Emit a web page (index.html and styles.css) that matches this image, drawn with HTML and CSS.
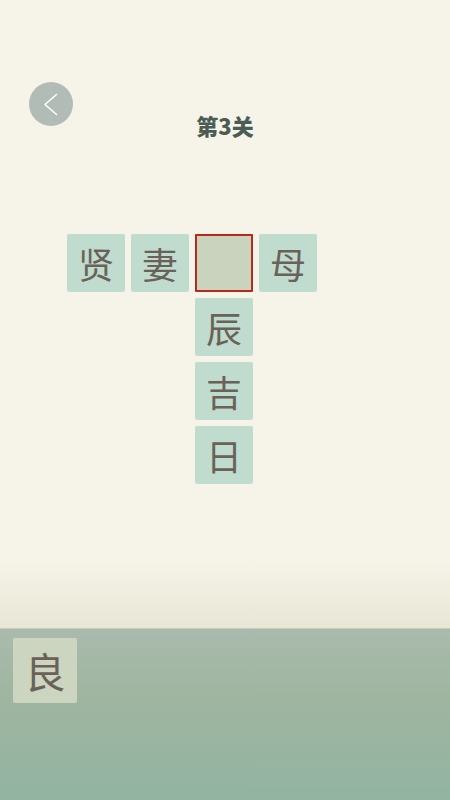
FILE: index.html
```html
<!DOCTYPE html>
<html lang="zh">
<head>
<meta charset="utf-8">
<link rel="stylesheet" href="styles.css">
</head>
<body>
<div class="screen">
  <header class="header">
    <div class="back">
      <svg width="44" height="44" viewBox="0 0 44 44"><path d="M27.5 12.5 L16 22.5 L27.5 32.5" fill="none" stroke="#ffffff" stroke-width="1.6" stroke-linecap="round" stroke-linejoin="round"/></svg>
    </div>
    <h1 class="title">第3关</h1>
    <div></div>
  </header>
  <main class="stage">
    <div class="board">
      <div class="tile c1 r1">贤</div>
      <div class="tile c2 r1">妻</div>
      <div class="tile c3 r1 empty"></div>
      <div class="tile c4 r1">母</div>
      <div class="tile c3 r2">辰</div>
      <div class="tile c3 r3">吉</div>
      <div class="tile c3 r4">日</div>
    </div>
  </main>
  <div class="fade"></div>
  <section class="tray">
    <div class="pick">良</div>
  </section>
</div>
</body>
</html>
```
FILE: styles.css
```css
html, body {
  margin: 0;
  padding: 0;
}
body {
  background: #f6f3e8;
  font-family: "Noto Sans CJK SC", "Noto Sans", sans-serif;
}
.screen {
  width: 450px;
  height: 800px;
  display: flex;
  flex-direction: column;
  overflow: hidden;
}
.header {
  display: grid;
  grid-template-columns: 1fr auto 1fr;
  align-items: start;
  padding: 82px 0 0 29px;
  height: 152px;
  box-sizing: border-box;
}
.back {
  width: 44px;
  height: 44px;
  border-radius: 50%;
  background: #b2bcb6;
}
.back svg { display: block; }
.title {
  margin: 28px 0 0 -29px;
  font-size: 22px;
  line-height: 30px;
  font-weight: 900;
  color: #4a5c53;
  font-family: "Noto Sans CJK SC", sans-serif;
}
.stage {
  height: 408px;
  padding: 82px 0 0 67px;
  box-sizing: border-box;
}
.board {
  display: grid;
  grid-template-columns: repeat(4, 58px);
  grid-template-rows: repeat(4, 58px);
  gap: 6px;
}
.tile {
  background: #bfdccf;
  border-radius: 2px;
  color: #6a6259;
  font-size: 36px;
  line-height: 58px;
  text-align: center;
}
.c1 { grid-column: 1; }
.c2 { grid-column: 2; }
.c3 { grid-column: 3; }
.c4 { grid-column: 4; }
.r1 { grid-row: 1; }
.r2 { grid-row: 2; }
.r3 { grid-row: 3; }
.r4 { grid-row: 4; }
.tile.empty {
  background: #cad3bd;
  border: 2px solid #b3291a;
  border-radius: 1px;
}
.fade {
  height: 68px;
  background: linear-gradient(#f6f3e8, #e8e7d6);
}
.tray {
  flex: 1;
  border-top: 1px solid #c6cdb9;
  background: linear-gradient(#aabbad 0%, #9fb5a0 40%, #93b4a2 100%);
  padding: 9px 0 0 13px;
}
.pick {
  width: 64px;
  height: 65px;
  background: #cbd5bf;
  border-radius: 2px;
  color: #6a6259;
  font-size: 41px;
  line-height: 65px;
  text-align: center;
}
```
